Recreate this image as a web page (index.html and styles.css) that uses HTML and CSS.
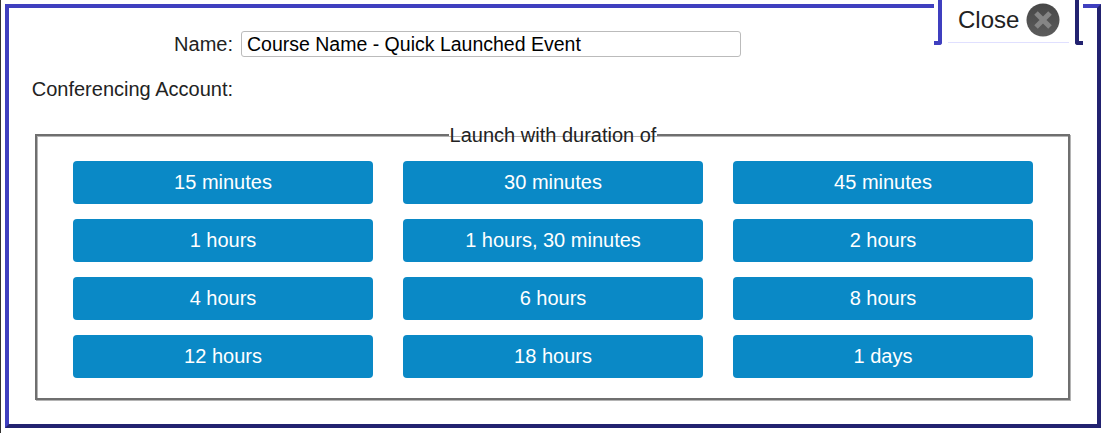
FILE: index.html
```html
<!DOCTYPE html>
<html lang="en">
<head>
<meta charset="utf-8">
<title>Quick Launch</title>
<link rel="stylesheet" href="styles.css">
</head>
<body>
<div class="frame">
  <div class="row name-row">
    <label class="label" for="name">Name:</label>
    <input class="name-input" id="name" type="text" value="Course Name - Quick Launched Event">
  </div>
  <div class="row account-row">
    <span class="label">Conferencing Account:</span>
  </div>
  <fieldset class="durations">
    <legend class="legend">Launch with duration of</legend>
    <div class="grid">
      <button class="btn">15 minutes</button>
      <button class="btn">30 minutes</button>
      <button class="btn">45 minutes</button>
      <button class="btn">1 hours</button>
      <button class="btn">1 hours, 30 minutes</button>
      <button class="btn">2 hours</button>
      <button class="btn">4 hours</button>
      <button class="btn">6 hours</button>
      <button class="btn">8 hours</button>
      <button class="btn">12 hours</button>
      <button class="btn">18 hours</button>
      <button class="btn">1 days</button>
    </div>
  </fieldset>
  <div class="close-tab">
    <div class="close-inner">
      <span class="close-text">Close</span>
      <svg class="close-icon" width="34" height="34" viewBox="0 0 34 34" aria-hidden="true">
        <defs>
          <linearGradient id="g" x1="0" y1="0" x2="0" y2="1">
            <stop offset="0" stop-color="#474747"/>
            <stop offset="1" stop-color="#5c5c5c"/>
          </linearGradient>
        </defs>
        <circle cx="17" cy="17" r="16.5" fill="url(#g)"/>
        <path d="M10 10 L24 24 M24 10 L10 24" stroke="#858585" stroke-width="5" fill="none"/>
      </svg>
    </div>
  </div>
</div>
</body>
</html>
```
FILE: styles.css
```css
html, body {
  margin: 0;
  padding: 0;
  background: #fff;
}
body {
  width: 1101px;
  height: 433px;
  overflow: hidden;
  position: relative;
  padding: 4px 0 0 5px;
  box-sizing: border-box;
  font-family: "Liberation Sans", Arial, sans-serif;
  color: #222;
  box-shadow: inset 1px 0 0 #333;
}
.frame {
  position: relative;
  box-sizing: border-box;
  width: 1096px;
  height: 424px;
  border-style: solid;
  border-width: 4px;
  border-color: #3f3fbf #222270 #222270 #3f3fbf;
  padding: 23px 26px 0 22px;
}
.row {
  display: flex;
  align-items: center;
}
.label {
  width: 202px;
  flex: none;
  text-align: right;
  font-size: 20px;
  line-height: 26px;
}
.name-row {
  gap: 8px;
}
.account-row {
  margin-top: 19px;
}
.name-input {
  box-sizing: border-box;
  width: 500px;
  height: 26px;
  padding: 0 5px;
  border: 1px solid #bbb;
  border-radius: 3px;
  background: #fff;
  color: #000;
  font-family: "Liberation Sans", Arial, sans-serif;
  font-size: 19.5px;
  outline: none;
}
.durations {
  box-sizing: border-box;
  width: 1035px;
  height: 275px;
  margin: 23px 0 0 4px;
  padding: 16px 35px 0 36px;
  border: 2px solid #6f6f6f;
  box-shadow: 1px 1px 0 #b4b4b4, inset 1px 1px 0 #b4b4b4;
  min-width: 0;
}
.legend {
  margin: 0 auto;
  padding: 0 1px;
  font-size: 20px;
  line-height: 20px;
}
.grid {
  display: grid;
  grid-template-columns: repeat(3, 300px);
  grid-auto-rows: 43px;
  column-gap: 30px;
  row-gap: 15px;
}
.btn {
  border: 0;
  border-radius: 4px;
  padding: 0;
  background: #0a89c6;
  color: #fff;
  font-family: "Liberation Sans", Arial, sans-serif;
  font-size: 20px;
}
.close-tab {
  position: absolute;
  top: -8px;
  right: 14px;
  box-sizing: border-box;
  width: 149px;
  height: 45px;
  background: #fff;
  padding: 0 14px;
}
.close-tab::before,
.close-tab::after {
  content: "";
  position: absolute;
  top: 0;
  bottom: 0;
  width: 8px;
  border-bottom: 4px solid;
  box-sizing: border-box;
}
.close-tab::before {
  left: 0;
  border-right: 4px solid #3f3fbf;
  border-bottom-color: #3f3fbf;
  border-bottom-right-radius: 3px;
}
.close-tab::after {
  right: 0;
  border-left: 4px solid #222270;
  border-bottom-color: #222270;
  border-bottom-left-radius: 3px;
}
.close-inner {
  box-sizing: border-box;
  height: 43px;
  display: flex;
  align-items: center;
  gap: 7px;
  padding: 0 0 3px 10px;
  border-bottom: 1px solid #e0e0ff;
}
.close-text {
  font-size: 24px;
  line-height: 28px;
}
.close-icon {
  flex: none;
}
```
